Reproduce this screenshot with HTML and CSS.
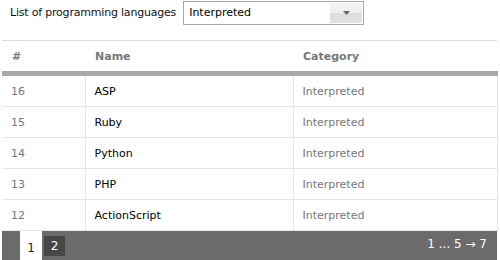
FILE: index.html
```html
<!DOCTYPE html>
<html>
<head>
<meta charset="utf-8">
<link rel="stylesheet" href="styles.css">
</head>
<body>
<div class="toolbar">
  <span class="label">List of programming languages</span>
  <div class="select">
    <span class="select-value">Interpreted</span>
    <span class="select-btn"><svg width="7" height="4" viewBox="0 0 7 4"><path d="M0 0H7L3.5 4Z" fill="#666"/></svg></span>
  </div>
</div>
<table class="grid">
  <colgroup><col class="c1"><col class="c2"><col class="c3"></colgroup>
  <thead>
    <tr><th>#</th><th>Name</th><th>Category</th></tr>
  </thead>
  <tbody>
    <tr><td class="num">16</td><td class="name">ASP</td><td class="cat">Interpreted</td></tr>
    <tr><td class="num">15</td><td class="name">Ruby</td><td class="cat">Interpreted</td></tr>
    <tr><td class="num">14</td><td class="name">Python</td><td class="cat">Interpreted</td></tr>
    <tr><td class="num">13</td><td class="name">PHP</td><td class="cat">Interpreted</td></tr>
    <tr><td class="num">12</td><td class="name">ActionScript</td><td class="cat">Interpreted</td></tr>
  </tbody>
</table>
<div class="pager">
  <div class="pages">
    <span class="page current">1</span>
    <span class="page">2</span>
  </div>
  <div class="summary">1 ... 5 → 7</div>
</div>
</body>
</html>
```
FILE: styles.css
```css
html, body {
  margin: 0;
  padding: 0;
  background: #fff;
  font-family: "DejaVu Sans", Verdana, sans-serif;
  font-size: 11px;
  color: #000;
}
.toolbar {
  display: flex;
  align-items: flex-start;
  height: 26px;
  padding: 1px 0 0 10px;
  margin-bottom: 13px;
}
.label {
  margin-right: 7px;
  color: #111;
  padding-top: 5px;
  letter-spacing: -0.2px;
}
.select {
  display: flex;
  align-items: stretch;
  width: 179px;
  height: 22px;
  border: 1px solid #a8a8a8;
  background: #fff;
}
.select-value {
  flex: 1;
  padding: 3px 0 0 5px;
  line-height: 16px;
}
.select-btn {
  width: 32px;
  margin: 1px;
  display: flex;
  align-items: center;
  justify-content: center;
  background: linear-gradient(#f2f2f2, #f0f0f0 50%, #dedede 50%, #e2e2e2);
}
.grid {
  margin-left: 2px;
  width: 495px;
  border-collapse: collapse;
  table-layout: fixed;
}
.c1 { width: 83px; }
.c2 { width: 208px; }
.c3 { width: 204px; }
.grid th {
  text-align: left;
  font-weight: bold;
  color: #777;
  height: 30px;
  padding: 0 0 0 10px;
  border-top: 1px solid #dcdcdc;
  border-bottom: 5px solid #a9a9a9;
  vertical-align: middle;
}
.grid td {
  height: 30px;
  padding: 0 0 0 9px;
  border-bottom: 1px solid #e6e6e6;
  border-right: 1px solid #e6e6e6;
  vertical-align: middle;
}
.grid td.num { color: #777; }
.grid td.name { color: #000; }
.grid td.cat { color: #777; }
.pager {
  margin-left: 2px;
  width: 495px;
  height: 30px;
  background: #6b6b6b;
  display: flex;
  justify-content: space-between;
  align-items: flex-start;
}
.pages {
  display: flex;
  align-items: flex-start;
  padding-left: 18px;
  gap: 2px;
}
.page {
  display: flex;
  align-items: center;
  justify-content: center;
  width: 21px;
  height: 20px;
  margin-top: 5px;
  background: #474747;
  color: #fff;
  font-size: 12px;
}
.page.current {
  width: 22px;
  height: 30px;
  margin-top: 0;
  background: #fff;
  color: #222;
  padding-top: 4px;
  box-sizing: border-box;
}
.summary {
  color: #fff;
  font-size: 12px;
  padding: 6px 10px 0 0;
}
```
